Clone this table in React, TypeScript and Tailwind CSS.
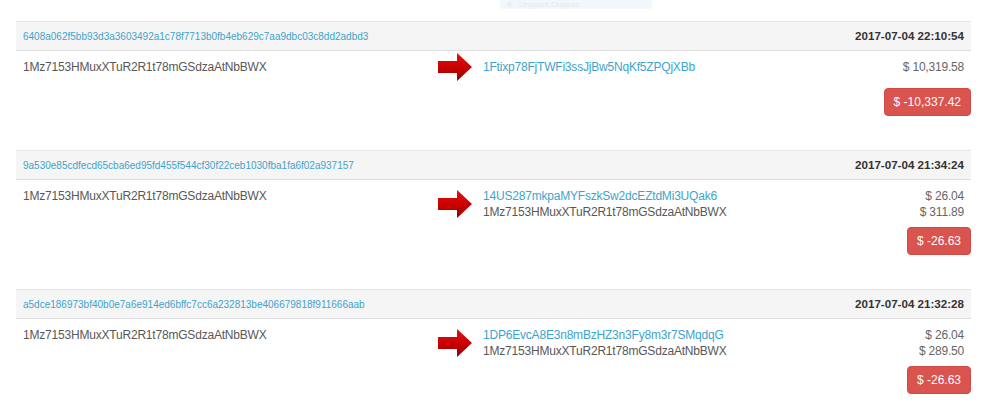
import React from 'react';

type Output = { address: string; amount: string; link?: boolean };

type Tx = {
  hash: string;
  time: string;
  input: string;
  outputs: Output[];
  total: string;
};

const INPUT = '1Mz7153HMuxXTuR2R1t78mGSdzaAtNbBWX';

const txs: Tx[] = [
  {
    hash: '6408a062f5bb93d3a3603492a1c78f7713b0fb4eb629c7aa9dbc03c8dd2adbd3',
    time: '2017-07-04 22:10:54',
    input: INPUT,
    outputs: [{ address: '1Ftixp78FjTWFi3ssJjBw5NqKf5ZPQjXBb', amount: '$ 10,319.58', link: true }],
    total: '$ -10,337.42',
  },
  {
    hash: '9a530e85cdfecd65cba6ed95fd455f544cf30f22ceb1030fba1fa6f02a937157',
    time: '2017-07-04 21:34:24',
    input: INPUT,
    outputs: [
      { address: '14US287mkpaMYFszkSw2dcEZtdMi3UQak6', amount: '$ 26.04', link: true },
      { address: INPUT, amount: '$ 311.89' },
    ],
    total: '$ -26.63',
  },
  {
    hash: 'a5dce186973bf40b0e7a6e914ed6bffc7cc6a232813be406679818f911666aab',
    time: '2017-07-04 21:32:28',
    input: INPUT,
    outputs: [
      { address: '1DP6EvcA8E3n8mBzHZ3n3Fy8m3r7SMqdqG', amount: '$ 26.04', link: true },
      { address: INPUT, amount: '$ 289.50' },
    ],
    total: '$ -26.63',
  },
];

function Arrow() {
  return (
    <svg width="34" height="28" viewBox="0 0 34 28" className="-my-[6px] shrink-0">
      <defs>
        <linearGradient id="arrowFill" x1="0" y1="0" x2="0" y2="1">
          <stop offset="0" stopColor="#e01010" />
          <stop offset="0.55" stopColor="#c80000" />
          <stop offset="1" stopColor="#900000" />
        </linearGradient>
      </defs>
      <polygon
        points="0,8 19,8 19,0 34,14 19,28 19,20 0,20"
        fill="url(#arrowFill)"
      />
    </svg>
  );
}

function TxBlock({ tx }: { tx: Tx }) {
  return (
    <div className="mb-[34px]">
      <div className="flex items-center justify-between h-[30px] bg-[#f5f5f5] border-t border-t-[#e6e6e6] border-b border-b-[#dedede] px-[7px]">
        <a className="text-[10px] text-[#3ea3cb]">{tx.hash}</a>
        <span className="text-[11.6px] font-bold text-[#333]">{tx.time}</span>
      </div>

      <div className="flex items-start pt-[8px] min-h-[30px] px-[7px] text-[12px] tracking-[-0.2px] leading-[16px]">
        <div className="w-[415px] shrink-0 text-[#585858]">{tx.input}</div>
        <div className="flex items-center gap-[11px] flex-1">
          <Arrow />
          <div className="flex flex-col">
            {tx.outputs.map((o, i) => (
              <span key={i} className={o.link ? 'text-[#3ea3cb]' : 'text-[#585858]'}>
                {o.address}
              </span>
            ))}
          </div>
        </div>
        <div className="flex flex-col items-end text-[#666]">
          {tx.outputs.map((o, i) => (
            <span key={i}>{o.amount}</span>
          ))}
        </div>
      </div>

      <div className="flex justify-end mt-[7px]">
        <span className="h-[28px] px-[9px] flex items-center rounded-[4px] bg-[#d9534f] border border-[#d24a45] text-white text-[12px]">
          {tx.total}
        </span>
      </div>
    </div>
  );
}

export default function App() {
  return (
    <div className="w-[1000px] h-[417px] overflow-hidden bg-white pl-[16px] pr-[29px] font-['Liberation_Sans',Arial,sans-serif]">
      <div className="flex h-[21px] items-start pl-[484px]">
        <div className="h-[9px] w-[152px] rounded-b-[3px] bg-[#f3f7fb] flex items-center gap-[6px] px-[6px] text-[8px] leading-[8px] text-[#e3e9f0]">
          <span>⊕</span>
          <span>Unspent Outputs</span>
        </div>
      </div>
      {txs.map((tx) => (
        <TxBlock key={tx.hash} tx={tx} />
      ))}
    </div>
  );
}
